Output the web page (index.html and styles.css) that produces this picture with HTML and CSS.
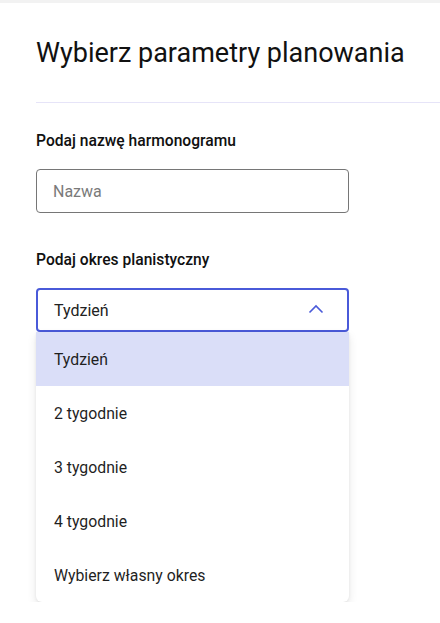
FILE: index.html
```html
<!DOCTYPE html>
<html lang="pl">
<head>
<meta charset="utf-8">
<link rel="stylesheet" href="styles.css">
</head>
<body>
<div class="topbar"></div>
<main class="page">
  <h1 class="title">Wybierz parametry planowania</h1>
  <hr class="divider">
  <section class="field field-first">
    <label class="label">Podaj nazwę harmonogramu</label>
    <div class="input"><span class="placeholder">Nazwa</span></div>
  </section>
  <section class="field field-second">
    <label class="label">Podaj okres planistyczny</label>
    <div class="select-wrap">
      <div class="select">
        <span class="select-value">Tydzień</span>
        <svg class="chevron" width="16" height="10" viewBox="0 0 16 10"><path d="M1.5 8.5 L8 2 L14.5 8.5" fill="none" stroke="#4a5ad9" stroke-width="1.6"/></svg>
      </div>
      <ul class="menu">
        <li class="option selected">Tydzień</li>
        <li class="option">2 tygodnie</li>
        <li class="option">3 tygodnie</li>
        <li class="option">4 tygodnie</li>
        <li class="option">Wybierz własny okres</li>
      </ul>
    </div>
  </section>
</main>
</body>
</html>
```
FILE: styles.css
```css
* { box-sizing: border-box; }
html, body { margin: 0; padding: 0; background: #fff; }
body { font-family: Roboto, "Liberation Sans", sans-serif; color: #1c1c1c; }
.topbar { height: 3px; background: #f2f2f2; }
.page { padding-left: 36px; }
.title {
  margin: 34px 0 0 0;
  font-size: 27px;
  line-height: 32px;
  font-weight: 400;
  color: #111;
}
.divider {
  margin: 33px 0 0 0;
  border: 0;
  height: 1px;
  background: #e6e4f8;
}
.field { width: 313px; }
.field-first { margin-top: 28px; }
.field-second { margin-top: 37px; }
.label {
  display: block;
  font-family: "Roboto Medium", Roboto, "Liberation Sans", sans-serif;
  font-size: 15.6px;
  line-height: 20px;
  font-weight: 500;
  color: #111;
}
.input {
  margin-top: 18px;
  height: 44px;
  border: 1px solid #767676;
  border-radius: 4px;
  display: flex;
  align-items: center;
  padding-left: 16px;
}
.placeholder { font-size: 16px; color: #7a7a7a; }
.select-wrap { margin-top: 18px; position: relative; }
.select {
  height: 44px;
  border: 2px solid #4a5ad9;
  border-radius: 4px;
  display: flex;
  align-items: center;
  justify-content: space-between;
  padding: 0 23px 0 16px;
}
.select-value { font-size: 16px; color: #222; }
.chevron { display: block; margin-top: -2px; }
.menu {
  list-style: none;
  margin: 0;
  padding: 0;
  background: #fff;
  border-radius: 0 0 6px 6px;
  box-shadow: 0 4px 10px rgba(0,0,0,0.10), 0 1px 3px rgba(0,0,0,0.06);
  overflow: hidden;
}
.option {
  height: 54px;
  display: flex;
  align-items: center;
  padding-left: 18px;
  font-size: 15.8px;
  color: #1f1f1f;
}
.option.selected { background: #dadef8; }
```
